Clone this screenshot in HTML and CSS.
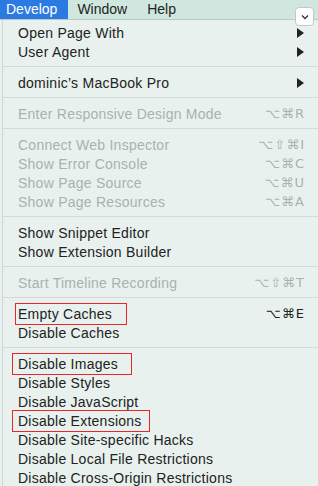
FILE: index.html
```html
<!DOCTYPE html>
<html lang="en">
<head>
    <meta charset="UTF-8">
    <meta name="viewport" content="width=device-width, initial-scale=1.0">
    <title>Develop menu</title>
    <link rel="stylesheet" href="styles.css">
</head>
<body>
    <div class="menubar">
        <span class="title active">Develop</span>
        <span class="title">Window</span>
        <span class="title">Help</span>
    </div>
    <div class="toggle">
        <svg width="10" height="6" viewBox="0 0 10 6"><path d="M2 1.5 L5 4.5 L8 1.5" fill="none" stroke="#333" stroke-width="1.3"/></svg>
    </div>

    <div class="menu">
        <div class="item"><span>Open Page With</span><span class="arrow"></span></div>
        <div class="item"><span>User Agent</span><span class="arrow"></span></div>
        <div class="sep"></div>
        <div class="item"><span>dominic’s MacBook Pro</span><span class="arrow"></span></div>
        <div class="sep"></div>
        <div class="item off"><span>Enter Responsive Design Mode</span><span class="key">⌥⌘R</span></div>
        <div class="sep"></div>
        <div class="item off"><span>Connect Web Inspector</span><span class="key">⌥⇧⌘I</span></div>
        <div class="item off"><span>Show Error Console</span><span class="key">⌥⌘C</span></div>
        <div class="item off"><span>Show Page Source</span><span class="key">⌥⌘U</span></div>
        <div class="item off"><span>Show Page Resources</span><span class="key">⌥⌘A</span></div>
        <div class="sep"></div>
        <div class="item"><span>Show Snippet Editor</span></div>
        <div class="item"><span>Show Extension Builder</span></div>
        <div class="sep"></div>
        <div class="item off"><span>Start Timeline Recording</span><span class="key">⌥⇧⌘T</span></div>
        <div class="sep"></div>
        <div class="item"><span class="mark mark-a">Empty Caches</span><span class="key">⌥⌘E</span></div>
        <div class="item"><span>Disable Caches</span></div>
        <div class="sep"></div>
        <div class="item"><span class="mark mark-b">Disable Images</span></div>
        <div class="item"><span>Disable Styles</span></div>
        <div class="item"><span>Disable JavaScript</span></div>
        <div class="item"><span class="mark mark-c">Disable Extensions</span></div>
        <div class="item"><span>Disable Site-specific Hacks</span></div>
        <div class="item"><span>Disable Local File Restrictions</span></div>
        <div class="item"><span>Disable Cross-Origin Restrictions</span></div>
    </div>
</body>
</html>
```

FILE: styles.css
```css
body {
    margin: 0;
    background: #e8f1ee;
    font-family: "Liberation Sans", Arial, sans-serif;
    font-size: 14px;
    color: #222;
    overflow: hidden;
}
.menubar {
    display: flex;
    height: 19px;
    line-height: 19px;
    background: #cfe7de;
    border-bottom: 1px solid #b9c9c3;
}
.title {
    padding: 0 10px;
    color: #1e2422;
}
.title.active {
    padding: 0 11px 0 6px;
    margin-right: -1px;
    background: #2a7ae2;
    color: #fff;
}
.toggle {
    position: absolute;
    top: 7px;
    left: 295px;
    width: 17px;
    height: 17px;
    background: #fff;
    border: 1px solid #c4c9c7;
    border-radius: 4px;
    display: flex;
    align-items: center;
    justify-content: center;
}
.menu {
    margin-left: 2px;
    border-left: 1px solid #cdd7d3;
    padding-top: 3px;
    height: 480px;
}
.item {
    display: flex;
    justify-content: space-between;
    align-items: center;
    height: 19px;
    padding: 0 13px 0 15px;
    letter-spacing: 0.25px;
}
.item.off {
    color: #a9b2af;
}
.sep {
    height: 1px;
    margin: 5px 0 6px;
    background: #d2dcd8;
}
.arrow {
    width: 0;
    height: 0;
    margin-right: 1px;
    border-top: 5px solid transparent;
    border-bottom: 5px solid transparent;
    border-left: 7px solid #222;
}
.key {
    font-family: "DejaVu Sans", sans-serif;
    font-size: 13px;
    letter-spacing: 1px;
}
.mark {
    border: 1px solid #e8262b;
    padding: 2px 14px 2px 2px;
    margin: -3px -17px -3px -3px;
}
.mark-b {
    padding-left: 5px;
    padding-right: 13px;
    margin-left: -6px;
}
.mark-c {
    padding: 2px 7px 2px 5px;
    margin: -3px -10px -3px -6px;
}
```
